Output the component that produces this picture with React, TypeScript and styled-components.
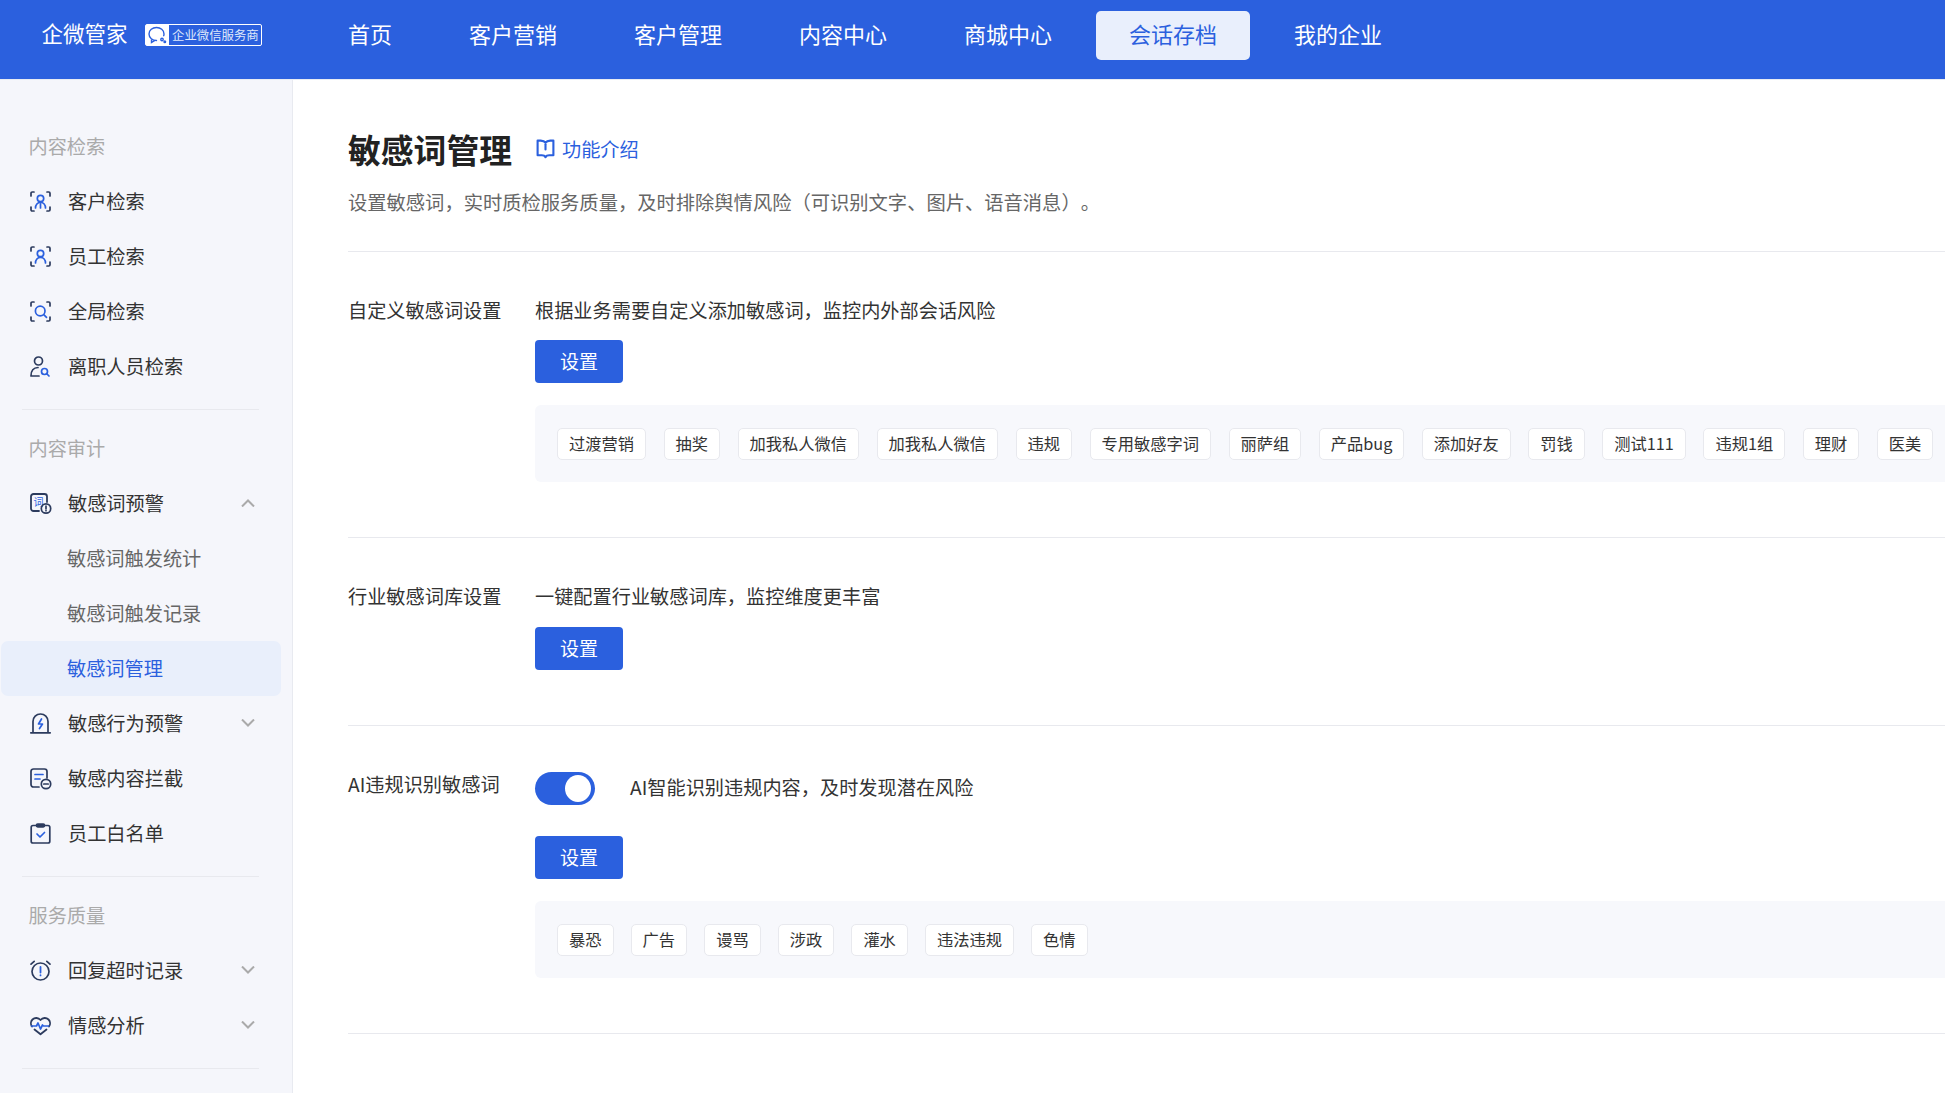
import React from "react";
import styled, { createGlobalStyle } from "styled-components";

const BLUE = "#2b60de";
const NAVY = "#2c3b5e";

const Global = createGlobalStyle`
  html, body { margin: 0; padding: 0; height: 100%; overflow: hidden; background: #fff; }
  body { font-family: "Noto Sans CJK SC", "Noto Sans", sans-serif; text-spacing-trim: space-all; }
  * { box-sizing: border-box; }
`;

const Page = styled.div`
  width: 100%;
  height: 100vh;
  display: flex;
  flex-direction: column;
  overflow: hidden;
`;

const Header = styled.header`
  height: 80px;
  flex: none;
  display: flex;
  align-items: flex-start;
  background: ${BLUE};
  border-bottom: 1px solid #e8ebf3;
  padding-left: 41.5px;
`;

const Brand = styled.div`
  width: 273.5px;
  height: 70px;
  display: flex;
  align-items: center;
  color: #fff;
  font-size: 21.5px;
  line-height: 30px;
`;

const BrandName = styled.span`
  width: 103.5px;
  flex: none;
  padding-bottom: 5px;
`;

const Badge = styled.div`
  width: 117px;
  height: 22px;
  display: flex;
  align-items: center;
  border: 1px solid #fff;
  border-radius: 2px;
`;

const BadgeIcon = styled.div`
  width: 23px;
  height: 100%;
  flex: none;
  background: #fff;
  display: flex;
  align-items: center;
  justify-content: center;
`;

const BadgeText = styled.span`
  font-size: 12.4px;
  line-height: 20px;
  margin-left: 3px;
  white-space: nowrap;
  color: #dfe8fb;
`;

const Nav = styled.nav`
  display: flex;
  gap: 11px;
  padding-top: 11px;
`;

const NavItem = styled.div<{ $active?: boolean }>`
  height: 49px;
  padding: 0 33px 6px;
  display: flex;
  align-items: center;
  font-size: 22px;
  border-radius: 5px;
  white-space: nowrap;
  color: ${(p) => (p.$active ? BLUE : "#fff")};
  background: ${(p) => (p.$active ? "#e9effc" : "transparent")};
`;

const Body = styled.div`
  flex: 1;
  min-height: 0;
  display: flex;
`;

const Sidebar = styled.aside`
  width: 293px;
  flex: none;
  background: #f5f6fb;
  border-right: 1px solid #e8eaf0;
  padding-top: 39px;
  overflow: hidden;
`;

const GroupTitle = styled.div`
  height: 55px;
  padding: 0 0 1px 28.5px;
  display: flex;
  align-items: center;
  font-size: 19.2px;
  color: #aaa;
`;

const Row = styled.div<{ $sub?: boolean; $active?: boolean }>`
  width: 280px;
  height: 55px;
  margin-left: 1px;
  padding: 0 26px 1px ${(p) => (p.$sub ? "66px" : "29px")};
  display: flex;
  align-items: center;
  gap: 17px;
  font-size: 19.2px;
  border-radius: 7px;
  white-space: nowrap;
  color: ${(p) => (p.$active ? BLUE : p.$sub ? "#666" : "#333")};
  background: ${(p) => (p.$active ? "#e9effb" : "transparent")};
`;

const RowIcon = styled.svg`
  width: 21px;
  height: 21px;
  flex: none;
  fill: none;
  stroke-width: 1.7;
  stroke-linecap: round;
  stroke-linejoin: round;
  overflow: visible;
`;

const Chevron = styled.svg`
  width: 14px;
  height: 8px;
  margin-left: auto;
  fill: none;
  stroke: #aaa;
  stroke-width: 2;
`;

const Rule = styled.div`
  height: 1px;
  margin: 15px 33px 11px 22px;
  background: #e8e9ee;
`;

const Main = styled.main`
  flex: 1;
  min-width: 0;
  padding: 45px 0 0 55px;
  overflow: hidden;
`;

const TitleRow = styled.div`
  height: 48px;
  display: flex;
  align-items: center;
`;

const Title = styled.h1`
  margin: 0;
  font-size: 32.8px;
  line-height: 48px;
  font-weight: 700;
  color: #222;
`;

const IntroLink = styled.a`
  margin-left: 24px;
  display: flex;
  align-items: center;
  gap: 7px;
  font-size: 19.2px;
  color: ${BLUE};
`;

const Desc = styled.p`
  margin: 15px 0 35px;
  font-size: 19.3px;
  line-height: 28px;
  color: #666;
`;

const Section = styled.section`
  display: flex;
  border-top: 1px solid #e8e9ee;
  padding: 44px 0 55px;
`;

const Label = styled.div`
  width: 187px;
  flex: none;
  font-size: 19.2px;
  line-height: 28px;
  color: #333;
  white-space: nowrap;
`;

const Content = styled.div<{ $offset?: boolean }>`
  flex: 1;
  min-width: 0;
  padding-top: ${(p) => (p.$offset ? "2px" : "0")};
`;

const Hint = styled.div`
  font-size: 19.2px;
  line-height: 28px;
  color: #333;
`;

const SwitchRow = styled.div`
  height: 33px;
  display: flex;
  align-items: center;
  gap: 35px;
  padding-bottom: 4px;
`;

const Toggle = styled.div`
  width: 60px;
  height: 33px;
  flex: none;
  margin-bottom: -4px;
  padding: 3px 4px;
  display: flex;
  justify-content: flex-end;
  border-radius: 17px;
  background: ${BLUE};
`;

const Knob = styled.div`
  width: 26px;
  height: 27px;
  border-radius: 50%;
  background: #fff;
`;

const SetButton = styled.button<{ $gap: number }>`
  display: block;
  width: 88px;
  height: 43px;
  margin-top: ${(p) => p.$gap}px;
  padding: 0 0 2px;
  border: 0;
  border-radius: 4px;
  background: ${BLUE};
  color: #fff;
  font: inherit;
  font-size: 19px;
`;

const TagPanel = styled.div<{ $gap: number }>`
  height: 77px;
  margin-top: 22px;
  padding: 0 22px;
  display: flex;
  align-items: center;
  gap: ${(p) => p.$gap}px;
  border-radius: 6px 0 0 6px;
  background: #f7f8fc;
  overflow: hidden;
`;

const Tag = styled.span`
  height: 32px;
  padding: 0 11px 1px;
  flex: none;
  display: flex;
  align-items: center;
  border: 1px solid #e8e9ee;
  border-radius: 5px;
  background: #fff;
  font-size: 16.25px;
  color: #333;
  white-space: nowrap;
`;

const Corners = () => (
  <g stroke={NAVY}>
    <path d="M1 5V2.2C1 1.5 1.5 1 2.2 1H4" />
    <path d="M17 1h1.8c.7 0 1.2.5 1.2 1.2V5" />
    <path d="M20 16v2.8c0 .7-.5 1.2-1.2 1.2H17" />
    <path d="M4 20H2.2C1.5 20 1 19.5 1 18.8V16" />
  </g>
);

const icons: Record<string, React.ReactNode> = {
  customer: (
    <>
      <Corners />
      <g stroke={BLUE}>
        <circle cx="10.5" cy="7.5" r="3.2" />
        <path d="M5.5 17c0-3.2 2-5.6 5-5.6s5 2.4 5 5.6M10.5 13v4" />
      </g>
    </>
  ),
  staff: (
    <>
      <Corners />
      <g stroke={BLUE}>
        <circle cx="10.5" cy="7.5" r="3.2" />
        <path d="M5.5 17c0-3.2 2-5.6 5-5.6s5 2.4 5 5.6" />
      </g>
    </>
  ),
  global: (
    <>
      <Corners />
      <g stroke={BLUE}>
        <circle cx="10.2" cy="10" r="4.8" />
        <path d="M14 13.8l2.5 2.5" />
      </g>
    </>
  ),
  resigned: (
    <>
      <g stroke={NAVY}>
        <circle cx="8.5" cy="5" r="4" />
        <path d="M1 20c0-5 2.500-8.500 7-8.500M1 20h8" />
      </g>
      <g stroke={BLUE}>
        <circle cx="14.500" cy="15.500" r="3" />
        <path d="M17 18l2 2" />
      </g>
    </>
  ),
  word: (
    <>
      <path d="M9 18H3.500C2.100 18 1 16.900 1 15.500V3.500C1 2.100 2.100 1 3.500 1h11C15.900 1 17 2.100 17 3.500V9" stroke={NAVY} strokeWidth="1.800" />
      <text x="3.500" y="12.500" fontSize="10" fill={BLUE} stroke="none" fontFamily="Noto Sans CJK SC, sans-serif">词</text>
      <circle cx="16" cy="15.500" r="4.700" stroke={NAVY} />
      <path d="M16 13.200v2.600M16 17.600v.1" stroke={NAVY} />
    </>
  ),
  behavior: (
    <>
      <path d="M3 19V8.500C3 4.300 6.300 1 10.500 1S18 4.300 18 8.500V19M.8 19.800h19.400" stroke={NAVY} />
      <path d="M11.500 6l-3 5h4l-3 4.500" stroke={BLUE} />
    </>
  ),
  block: (
    <>
      <path d="M9 19H3.500C2.100 19 1 17.900 1 16.500V3.500C1 2.100 2.100 1 3.500 1h11C15.900 1 17 2.100 17 3.500V10" stroke={NAVY} />
      <path d="M5 6.500h8M5 11h5" stroke={BLUE} />
      <circle cx="16" cy="16" r="4.700" stroke={NAVY} />
      <path d="M13.800 16h4.400" stroke={NAVY} />
    </>
  ),
  white: (
    <>
      <path d="M6.500 2.500H3C2.100 2.500 1.200 3.400 1.200 4.300V18.200C1.200 19.100 2.100 20 3 20h15c.9 0 1.800-.9 1.800-1.800V4.300c0-.9-.9-1.800-1.800-1.800h-3.500" stroke={NAVY} />
      <rect x="6.500" y="1" width="8" height="2.800" rx="1.200" stroke={NAVY} fill={NAVY} />
      <path d="M7 11l3 3 4.500-4.500" stroke={BLUE} />
    </>
  ),
  alarm: (
    <>
      <circle cx="10.500" cy="11.500" r="8.500" stroke={NAVY} />
      <path d="M1 4.200L4.200 1.300M20 4.200l-3.200-2.900" stroke={NAVY} />
      <path d="M10.500 7v5.500M10.500 15.200v.2" stroke={BLUE} strokeWidth="1.800" />
    </>
  ),
  heart: (
    <>
      <path d="M2 11.500C.5 9.500.5 6.500 2.500 4.500c2.300-2.200 5.800-2 8 .5 2.200-2.500 5.700-2.700 8-.5 2 2 2 5 .5 7M4.500 14.500l6 4.800 6-4.800" stroke={NAVY} strokeWidth="1.800" />
      <path d="M1.500 11h5l1.500-3 2.500 6 2-4 1 1h5" stroke={BLUE} />
    </>
  ),
};

const Icon = ({ name }: { name: string }) => (
  <RowIcon viewBox="0 0 21 21">{icons[name]}</RowIcon>
);

const Arrow = ({ up }: { up?: boolean }) => (
  <Chevron viewBox="0 0 14 8">
    <polyline points={up ? "1,7.500 7,1.500 13,7.500" : "1,.5 7,6.500 13,.5"} />
  </Chevron>
);

const BookIcon = () => (
  <svg width="19" height="20" viewBox="0 0 18 19" fill="none" stroke={BLUE} strokeWidth="2" strokeLinejoin="round" strokeLinecap="round">
    <path d="M9 3.500C8 2 6.500 1.500 4.500 1.500H1.500V15.500H5.500C7 15.500 8.300 16 9 17.200 9.700 16 11 15.500 12.500 15.500H16.500V1.500H13.500C11.500 1.500 10 2 9 3.500Z" />
    <path d="M9 5v5" />
  </svg>
);

const BadgeLogo = () => (
  <svg width="19" height="18" viewBox="0 0 19 18" fill="none" stroke={BLUE} strokeWidth="1.400" strokeLinecap="round">
    <path d="M8.500 14.500c-4 0-7.500-2.700-7.500-6.500S4.500 1.500 8.500 1.500 16 4.200 16 8c0 .6-.1 1.200-.3 1.700" />
    <path d="M3.500 14v2.500l3-1.800" />
    <circle cx="14" cy="13.500" r="1.200" />
    <circle cx="16.800" cy="15.800" r=".8" />
  </svg>
);

const firstTags = ["过渡营销", "抽奖", "加我私人微信", "加我私人微信", "违规", "专用敏感字词", "丽萨组", "产品bug", "添加好友", "罚钱", "测试111", "违规1组", "理财", "医美"];
const aiTags = ["暴恐", "广告", "谩骂", "涉政", "灌水", "违法违规", "色情"];
const navItems = ["首页", "客户营销", "客户管理", "内容中心", "商城中心", "会话存档", "我的企业"];

export default function App() {
  return (
    <Page>
      <Global />
      <Header>
        <Brand>
          <BrandName>企微管家</BrandName>
          <Badge>
            <BadgeIcon><BadgeLogo /></BadgeIcon>
            <BadgeText>企业微信服务商</BadgeText>
          </Badge>
        </Brand>
        <Nav>
          {navItems.map((n) => (
            <NavItem key={n} $active={n === "会话存档"}>{n}</NavItem>
          ))}
        </Nav>
      </Header>
      <Body>
        <Sidebar>
          <GroupTitle>内容检索</GroupTitle>
          <Row><Icon name="customer" />客户检索</Row>
          <Row><Icon name="staff" />员工检索</Row>
          <Row><Icon name="global" />全局检索</Row>
          <Row><Icon name="resigned" />离职人员检索</Row>
          <Rule />
          <GroupTitle>内容审计</GroupTitle>
          <Row><Icon name="word" />敏感词预警<Arrow up /></Row>
          <Row $sub>敏感词触发统计</Row>
          <Row $sub>敏感词触发记录</Row>
          <Row $sub $active>敏感词管理</Row>
          <Row><Icon name="behavior" />敏感行为预警<Arrow /></Row>
          <Row><Icon name="block" />敏感内容拦截</Row>
          <Row><Icon name="white" />员工白名单</Row>
          <Rule />
          <GroupTitle>服务质量</GroupTitle>
          <Row><Icon name="alarm" />回复超时记录<Arrow /></Row>
          <Row><Icon name="heart" />情感分析<Arrow /></Row>
          <Rule />
        </Sidebar>
        <Main>
          <TitleRow>
            <Title>敏感词管理</Title>
            <IntroLink><BookIcon />功能介绍</IntroLink>
          </TitleRow>
          <Desc>设置敏感词，实时质检服务质量，及时排除舆情风险（可识别文字、图片、语音消息）。</Desc>
          <Section>
            <Label>自定义敏感词设置</Label>
            <Content>
              <Hint>根据业务需要自定义添加敏感词，监控内外部会话风险</Hint>
              <SetButton $gap={16}>设置</SetButton>
              <TagPanel $gap={17.5}>
                {firstTags.map((t, i) => <Tag key={i}>{t}</Tag>)}
              </TagPanel>
            </Content>
          </Section>
          <Section>
            <Label>行业敏感词库设置</Label>
            <Content>
              <Hint>一键配置行业敏感词库，监控维度更丰富</Hint>
              <SetButton $gap={17}>设置</SetButton>
            </Content>
          </Section>
          <Section>
            <Label>AI违规识别敏感词</Label>
            <Content $offset>
              <SwitchRow>
                <Toggle><Knob /></Toggle>
                <Hint>AI智能识别违规内容，及时发现潜在风险</Hint>
              </SwitchRow>
              <SetButton $gap={31}>设置</SetButton>
              <TagPanel $gap={17.1}>
                {aiTags.map((t) => <Tag key={t}>{t}</Tag>)}
              </TagPanel>
            </Content>
          </Section>
          <Section />
        </Main>
      </Body>
    </Page>
  );
}
